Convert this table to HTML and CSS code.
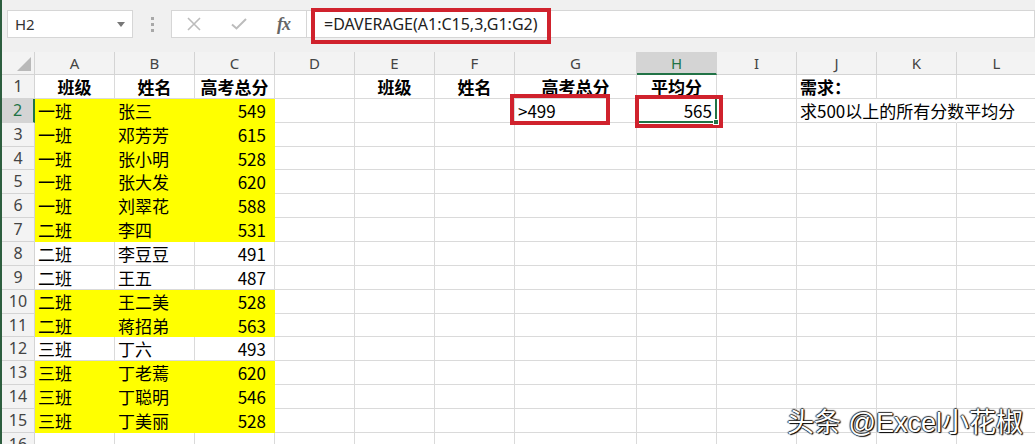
FILE: index.html
```html
<!DOCTYPE html>
<html lang="zh-CN">
<head>
<meta charset="utf-8">
<title>DAVERAGE</title>
<link rel="stylesheet" href="styles.css">
</head>
<body>
<div class="excel">
  <div class="fbar">
    <div class="namebox"><span>H2</span><span class="dd"></span></div>
    <div class="grip"><i></i><i></i><i></i></div>
    <div class="fbtns">
      <svg class="ico-x" width="14" height="14" viewBox="0 0 14 14"><path d="M1 1L13 13M13 1L1 13" stroke="#bcbcbc" stroke-width="1.6" fill="none"/></svg>
      <svg class="ico-ok" width="16" height="12" viewBox="0 0 16 12"><path d="M1 6.5L5.5 10.5L15 1" stroke="#bcbcbc" stroke-width="2" fill="none"/></svg>
      <span class="fx">fx</span>
    </div>
    <div class="finput"><span class="ftext">=DAVERAGE(A1:C15,3,G1:G2)</span></div>
    <div class="redbox rb-formula"></div>
  </div>

  <div class="sheet">
    <div class="h corner"></div>
    <div class="h">A</div><div class="h">B</div><div class="h">C</div><div class="h">D</div><div class="h">E</div><div class="h">F</div><div class="h">G</div><div class="h sel">H</div><div class="h">I</div><div class="h">J</div><div class="h">K</div><div class="h">L</div>

    <div class="r">1</div>
    <div class="c b ctr">班级</div><div class="c b ctr">姓名</div><div class="c b ctr">高考总分</div><div class="c"></div><div class="c b ctr">班级</div><div class="c b ctr">姓名</div><div class="c b ctr">高考总分</div><div class="c b ctr">平均分</div><div class="c"></div><div class="c b">需求：</div><div class="c"></div><div class="c"></div>

    <div class="r rsel">2</div>
    <div class="c y">一班</div><div class="c y">张三</div><div class="c y n">549</div><div class="c"></div><div class="c"></div><div class="c"></div><div class="c">&gt;499</div><div class="c n2 active">565</div><div class="c"></div><div class="c nob">求500以上的所有分数平均分</div><div class="c nob"></div><div class="c"></div>

    <div class="r">3</div>
    <div class="c y">一班</div><div class="c y">邓芳芳</div><div class="c y n">615</div><div class="c"></div><div class="c"></div><div class="c"></div><div class="c"></div><div class="c"></div><div class="c"></div><div class="c"></div><div class="c"></div><div class="c"></div>

    <div class="r">4</div>
    <div class="c y">一班</div><div class="c y">张小明</div><div class="c y n">528</div><div class="c"></div><div class="c"></div><div class="c"></div><div class="c"></div><div class="c"></div><div class="c"></div><div class="c"></div><div class="c"></div><div class="c"></div>

    <div class="r">5</div>
    <div class="c y">一班</div><div class="c y">张大发</div><div class="c y n">620</div><div class="c"></div><div class="c"></div><div class="c"></div><div class="c"></div><div class="c"></div><div class="c"></div><div class="c"></div><div class="c"></div><div class="c"></div>

    <div class="r">6</div>
    <div class="c y">一班</div><div class="c y">刘翠花</div><div class="c y n">588</div><div class="c"></div><div class="c"></div><div class="c"></div><div class="c"></div><div class="c"></div><div class="c"></div><div class="c"></div><div class="c"></div><div class="c"></div>

    <div class="r">7</div>
    <div class="c y">二班</div><div class="c y">李四</div><div class="c y n">531</div><div class="c"></div><div class="c"></div><div class="c"></div><div class="c"></div><div class="c"></div><div class="c"></div><div class="c"></div><div class="c"></div><div class="c"></div>

    <div class="r">8</div>
    <div class="c">二班</div><div class="c">李豆豆</div><div class="c n">491</div><div class="c"></div><div class="c"></div><div class="c"></div><div class="c"></div><div class="c"></div><div class="c"></div><div class="c"></div><div class="c"></div><div class="c"></div>

    <div class="r">9</div>
    <div class="c">二班</div><div class="c">王五</div><div class="c n">487</div><div class="c"></div><div class="c"></div><div class="c"></div><div class="c"></div><div class="c"></div><div class="c"></div><div class="c"></div><div class="c"></div><div class="c"></div>

    <div class="r">10</div>
    <div class="c y">二班</div><div class="c y">王二美</div><div class="c y n">528</div><div class="c"></div><div class="c"></div><div class="c"></div><div class="c"></div><div class="c"></div><div class="c"></div><div class="c"></div><div class="c"></div><div class="c"></div>

    <div class="r">11</div>
    <div class="c y">二班</div><div class="c y">蒋招弟</div><div class="c y n">563</div><div class="c"></div><div class="c"></div><div class="c"></div><div class="c"></div><div class="c"></div><div class="c"></div><div class="c"></div><div class="c"></div><div class="c"></div>

    <div class="r">12</div>
    <div class="c">三班</div><div class="c">丁六</div><div class="c n">493</div><div class="c"></div><div class="c"></div><div class="c"></div><div class="c"></div><div class="c"></div><div class="c"></div><div class="c"></div><div class="c"></div><div class="c"></div>

    <div class="r">13</div>
    <div class="c y">三班</div><div class="c y">丁老蔫</div><div class="c y n">620</div><div class="c"></div><div class="c"></div><div class="c"></div><div class="c"></div><div class="c"></div><div class="c"></div><div class="c"></div><div class="c"></div><div class="c"></div>

    <div class="r">14</div>
    <div class="c y">三班</div><div class="c y">丁聪明</div><div class="c y n">546</div><div class="c"></div><div class="c"></div><div class="c"></div><div class="c"></div><div class="c"></div><div class="c"></div><div class="c"></div><div class="c"></div><div class="c"></div>

    <div class="r">15</div>
    <div class="c y">三班</div><div class="c y">丁美丽</div><div class="c y n">528</div><div class="c"></div><div class="c"></div><div class="c"></div><div class="c"></div><div class="c"></div><div class="c"></div><div class="c"></div><div class="c"></div><div class="c"></div>

    <div class="r">16</div>
    <div class="c"></div><div class="c"></div><div class="c"></div><div class="c"></div><div class="c"></div><div class="c"></div><div class="c"></div><div class="c"></div><div class="c"></div><div class="c"></div><div class="c"></div><div class="c"></div>

    <div class="redbox rb-g2"></div>
    <div class="redbox rb-h2"></div>
  </div>

  <div class="watermark">头条 @Excel小花椒</div>
</div>
</body>
</html>
```

FILE: styles.css
```css
html, body {
  margin: 0;
  padding: 0;
}
body {
  width: 1035px;
  height: 444px;
  overflow: hidden;
  background: #fff;
  font-family: "Noto Sans CJK SC", sans-serif;
}
.excel {
  position: relative;
  height: 444px;
  border-left: 2px solid #2d5e3f;
  box-sizing: border-box;
  overflow: hidden;
}

/* formula bar */
.fbar {
  position: relative;
  height: 52px;
  background: #f0f0f0;
  display: flex;
  align-items: flex-start;
  padding-top: 10px;
  box-sizing: border-box;
  font-family: "Noto Sans", sans-serif;
}
.namebox {
  margin-left: 5px;
  width: 126px;
  height: 28px;
  box-sizing: border-box;
  background: #fff;
  border: 1px solid #d6d6d6;
  display: flex;
  align-items: center;
  justify-content: space-between;
  padding: 0 7px 0 7px;
  font-size: 15px;
  color: #333;
}
.dd {
  width: 0;
  height: 0;
  border-left: 4px solid transparent;
  border-right: 4px solid transparent;
  border-top: 5px solid #777;
}
.grip {
  width: 38px;
  height: 28px;
  display: flex;
  flex-direction: column;
  align-items: center;
  justify-content: center;
  gap: 3px;
}
.grip i {
  display: block;
  width: 3px;
  height: 3px;
  background: #a8a8a8;
}
.fbtns {
  width: 136px;
  height: 28px;
  box-sizing: border-box;
  background: #fff;
  border: 1px solid #d6d6d6;
  display: flex;
  align-items: center;
  padding-left: 15px;
}
.ico-x { margin-right: 30px; }
.ico-ok { margin-right: 30px; }
.fx {
  font-family: "Liberation Serif", serif;
  font-style: italic;
  font-weight: bold;
  font-size: 18px;
  color: #666;
  letter-spacing: -1px;
}
.finput {
  flex: 1;
  height: 28px;
  box-sizing: border-box;
  background: #fff;
  border: 1px solid #d6d6d6;
  border-left: none;
  padding-left: 17px;
  font-size: 16px;
  line-height: 26px;
  color: #222;
  white-space: nowrap;
}

/* red annotation boxes */
.redbox {
  position: absolute;
  border: 4px solid #d0222d;
  box-sizing: border-box;
  pointer-events: none;
}
.rb-formula { left: 309px; top: 8px; width: 240px; height: 36px; }
.rb-g2 { left: 508px; top: 42px; width: 100px; height: 31px; }
.rb-h2 { left: 633px; top: 43px; width: 88px; height: 33px; }

/* sheet */
.sheet {
  position: relative;
  display: grid;
  grid-template-columns: 33px repeat(6, 80px) 122px repeat(5, 80px);
  grid-template-rows: 23px repeat(16, 23.87px);
}
.h, .r {
  background: #f3f3f3;
  border-right: 1px solid #d4d4d4;
  border-bottom: 1px solid #d4d4d4;
  box-sizing: border-box;
  text-align: center;
  font-family: "Noto Sans", sans-serif;
  color: #444;
  font-size: 15px;
  line-height: 22px;
}
.r { font-size: 16px; line-height: 23px; }
.corner { position: relative; }
.corner::after {
  content: "";
  position: absolute;
  right: 3px;
  bottom: 3px;
  width: 0;
  height: 0;
  border-left: 14px solid transparent;
  border-bottom: 14px solid #b9b9b9;
}
.h.sel {
  background: #d4d4d4;
  color: #217346;
  border-bottom: 2px solid #217346;
}
.r.rsel {
  background: #d4d4d4;
  color: #217346;
  border-right: 2px solid #217346;
}
.c {
  border-right: 1px solid #dadada;
  border-bottom: 1px solid #dadada;
  box-sizing: border-box;
  font-size: 17px;
  line-height: 23px;
  padding: 0 3px;
  white-space: nowrap;
  color: #000;
}
.c.b { font-weight: bold; }
.c.ctr { text-align: center; }
.c.n { text-align: right; padding-right: 8px; }
.c.n2 { text-align: right; padding-right: 4px; }
.c.y { background: #ffff00; border-color: #ffff00; }
.c.nob { border-right-color: transparent; }
.c.active { position: relative; }
.c.active::after {
  content: "";
  position: absolute;
  left: -2px;
  top: -2px;
  right: -1px;
  bottom: -1px;
  border: 2px solid #217346;
}
.c.active::before {
  content: "";
  position: absolute;
  right: -3px;
  bottom: -3px;
  width: 6px;
  height: 6px;
  background: #217346;
  border: 1px solid #fff;
  box-sizing: border-box;
  z-index: 1;
}

.watermark {
  position: absolute;
  right: 12px;
  bottom: 4px;
  font-family: "Liberation Sans", "Noto Sans CJK SC", sans-serif;
  font-size: 27px;
  color: #fff;
  white-space: nowrap;
  text-shadow: 1px 1px 1px #000, -1px 0 1px #333, 0 -1px 1px #333, 1px 0 1px #333;
}
```
